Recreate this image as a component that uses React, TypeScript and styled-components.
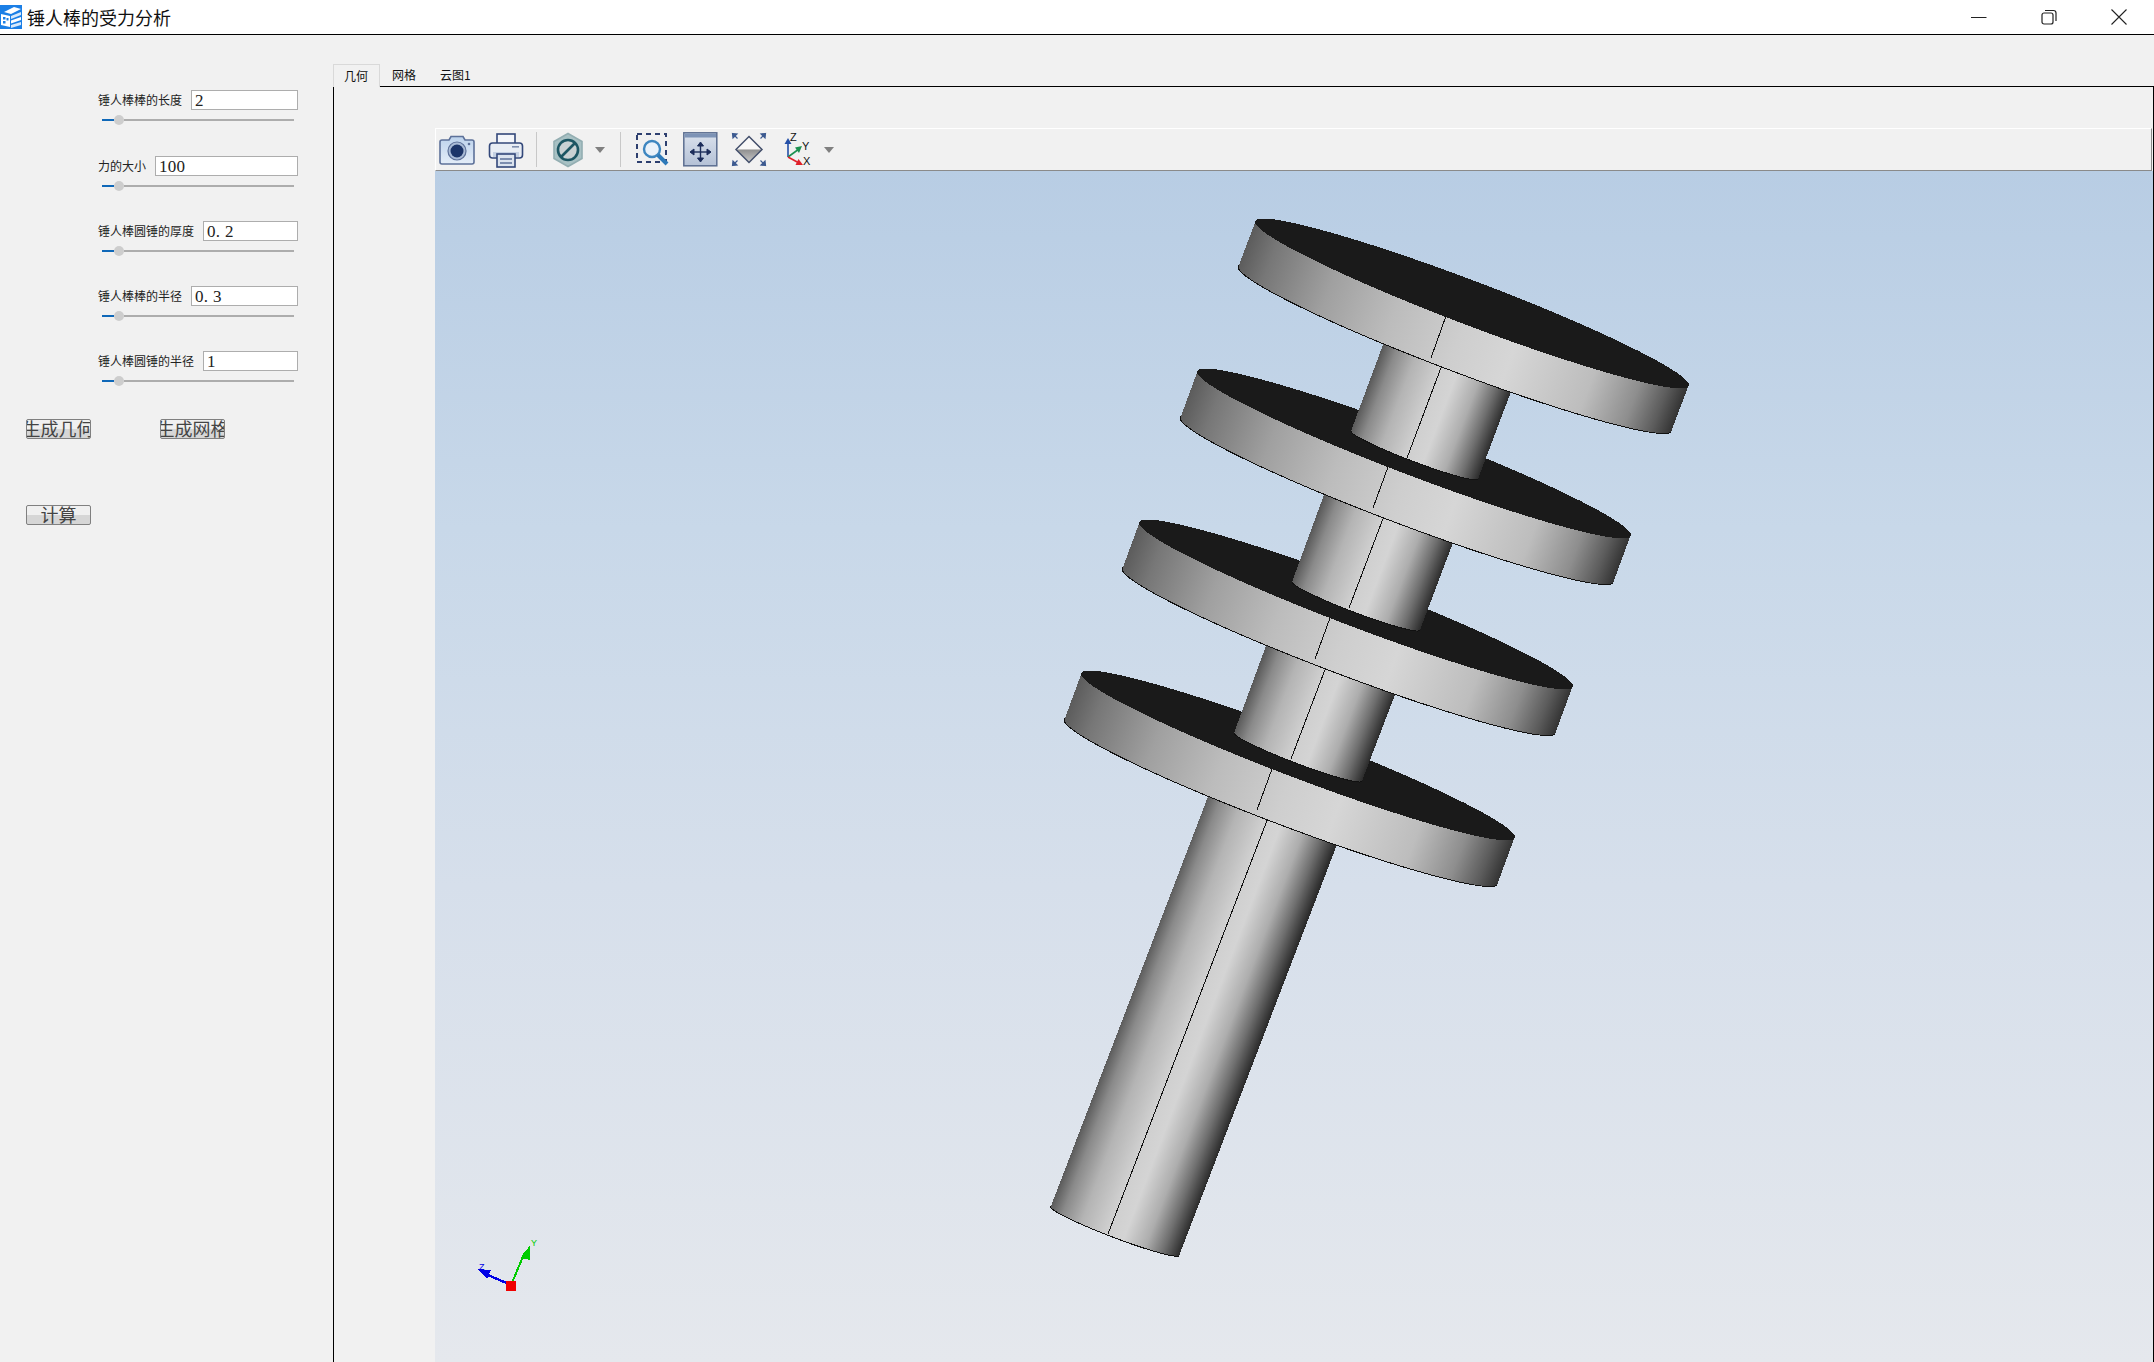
import React from 'react';
import styled, { createGlobalStyle } from 'styled-components';

const Global = createGlobalStyle`
  html, body, #root { margin: 0; height: 100%; }
  body { background: #f1f1f1; font-family: "Noto Sans CJK SC", "Liberation Sans", sans-serif; overflow: hidden; }
`;

const Window = styled.div`
  height: 100vh;
  display: flex;
  flex-direction: column;
  overflow: hidden;
`;

const TitleBar = styled.header`
  height: 34px;
  flex: none;
  background: #fff;
  border-bottom: 1px solid #000;
  display: flex;
  align-items: center;
`;

const TitleText = styled.span`
  margin-left: 5px;
  font-size: 18px;
  color: #111;
  flex: 1;
`;

const WinButton = styled.div`
  width: 70px;
  height: 34px;
  display: flex;
  align-items: center;
  justify-content: center;
`;

const Content = styled.div`
  flex: 1;
  min-height: 0;
  display: flex;
`;

const Sidebar = styled.aside`
  width: 333px;
  flex: none;
  padding-top: 55px;
  display: flex;
  flex-direction: column;
`;

const Field = styled.div`
  width: 200px;
  margin-left: 98px;
  margin-bottom: 30px;
  &:nth-child(1) { margin-bottom: 31px; }
`;

const FieldRow = styled.div`
  display: flex;
  align-items: center;
  gap: 9px;
  height: 20px;
`;

const FieldLabel = styled.label`
  font-size: 12px;
  color: #222;
  white-space: nowrap;
  position: relative;
  top: -0.5px;
`;

const NumberInput = styled.input`
  flex: 1;
  min-width: 0;
  height: 20px;
  box-sizing: border-box;
  border: 1px solid #adadad;
  background: #fff;
  padding: 2px 0 0 3px;
  font-family: "Liberation Serif", serif;
  font-size: 17px;
  letter-spacing: 0.3px;
  color: #222;
  outline: none;
`;

const Slider = styled.div`
  width: 192px;
  height: 10px;
  margin: 5px 0 0 4px;
  display: flex;
  align-items: center;
`;

const SliderFill = styled.div`
  width: 12px;
  height: 2px;
  background: #0f68b8;
`;

const SliderThumb = styled.div`
  width: 10px;
  height: 10px;
  border-radius: 50%;
  background: #cdcdcd;
`;

const SliderRail = styled.div`
  flex: 1;
  height: 2px;
  background: #adadad;
`;

const ButtonRow = styled.div<{ $top: number }>`
  display: flex;
  gap: 69px;
  padding-left: 26px;
  margin-top: ${p => p.$top}px;
`;

const ActionButton = styled.button`
  width: 65px;
  height: 20px;
  box-sizing: border-box;
  padding: 0 0 2px;
  border: 1px solid #808080;
  border-radius: 2px;
  background: linear-gradient(#f0f0f0 0, #f0f0f0 50%, #d6d6d6 50%, #d6d6d6 100%);
  display: flex;
  align-items: center;
  justify-content: center;
  overflow: hidden;
  font-family: "Noto Sans CJK SC", sans-serif;
  font-size: 18px;
  line-height: 18px;
  color: #444;
  white-space: nowrap;
  span { flex: none; }
`;

const Main = styled.main`
  flex: 1;
  min-width: 0;
  padding-top: 29px;
  display: flex;
  flex-direction: column;
`;

const TabBar = styled.div`
  height: 22px;
  flex: none;
  display: flex;
  position: relative;
  z-index: 1;
`;

const Tab = styled.div<{ $active?: boolean }>`
  box-sizing: border-box;
  height: ${p => (p.$active ? 23 : 22)}px;
  padding: ${p => (p.$active ? '0 11px 0 10px' : '0 12px')};
  font-size: 12px;
  line-height: 22px;
  color: #111;
  background: ${p => (p.$active ? '#f1f1f1' : 'transparent')};
  border: ${p => (p.$active ? '1px solid #d9d9d9' : 'none')};
  border-bottom: none;
`;

const Pane = styled.section`
  flex: 1;
  min-height: 0;
  border: 1px solid #000;
  border-bottom: none;
  padding: 41px 0 0 101px;
  display: flex;
  flex-direction: column;
`;

const Toolbar = styled.div`
  height: 43px;
  flex: none;
  box-sizing: border-box;
  margin-right: 1px;
  border-top: 1px solid #fff;
  border-left: 1px solid #fff;
  border-right: 1px solid #8a8a8a;
  border-bottom: 1px solid #8a8a8a;
  background: #f1f1f1;
  display: flex;
  align-items: center;
  padding-left: 3px;
`;

const ToolIcon = styled.div<{ $ml?: number }>`
  width: 36px;
  height: 36px;
  flex: none;
  margin-left: ${p => p.$ml ?? 0}px;
  svg { display: block; }
`;

const Separator = styled.div<{ $ml: number }>`
  width: 1px;
  height: 35px;
  background: #c8c8c8;
  margin-left: ${p => p.$ml}px;
  flex: none;
`;

const Caret = styled.div<{ $ml: number }>`
  width: 0;
  height: 0;
  flex: none;
  margin-left: ${p => p.$ml}px;
  border-left: 5px solid transparent;
  border-right: 5px solid transparent;
  border-top: 6px solid #808080;
`;

const Canvas = styled.div`
  flex: 1;
  min-height: 0;
  background: linear-gradient(#b8cde4 0%, #c8d8e9 30%, #d6dfeb 60%, #e5e8ed 100%);
  svg { display: block; width: 100%; height: 100%; }
`;

type Pt = [number, number];
interface Cyl { id: string; lt: Pt; rt: Pt; lb: Pt; rb: Pt; b: number; seam: [Pt, Pt]; disk: boolean }

// major axis of every circle on screen, square to the part's axis
const ROT = 20.8;

const half = (l: Pt, r: Pt) => Math.hypot(r[0] - l[0], r[1] - l[1]) / 2;

const bodyPath = (c: Cyl) => {
  const a = half(c.lb, c.rb);
  const top = c.disk
    ? `M${c.lt} A${a} ${c.b} ${ROT} 0 0 ${c.rt}`
    : `M${c.lt} L${c.rt}`;
  return `${top} L${c.rb} A${a} ${c.b} ${ROT} 0 1 ${c.lb} Z`;
};

const edgePath = (c: Cyl) => {
  const a = half(c.lb, c.rb);
  return `M${c.lb} A${a} ${c.b} ${ROT} 0 0 ${c.rb}`;
};

const facePath = (c: Cyl) => {
  const a = half(c.lt, c.rt);
  return `M${c.lt} A${a} ${c.b} ${ROT} 0 1 ${c.rt} A${a} ${c.b} ${ROT} 0 1 ${c.lt} Z`;
};

const gradientEnds = (c: Cyl) => {
  const a = half(c.lb, c.rb);
  const cx = (c.lb[0] + c.rb[0]) / 2;
  const cy = (c.lb[1] + c.rb[1]) / 2;
  const dx = a * Math.cos((ROT * Math.PI) / 180);
  const dy = a * Math.sin((ROT * Math.PI) / 180);
  return { x1: cx - dx, y1: cy - dy, x2: cx + dx, y2: cy + dy };
};

// painted from the bottom of the part upwards, each disk hides the top of the shaft under it
const parts: Cyl[] = [
  { id: 'shaft4', disk: false, b: 6.5, lt: [1209, 794], rt: [1338, 842], lb: [1051, 1206], rb: [1179, 1256], seam: [[1268, 818], [1108, 1234]] },
  { id: 'disk4', disk: true, b: 22, lt: [1082, 672], rt: [1514, 839], lb: [1065, 718], rb: [1497, 885], seam: [[1272, 769], [1257, 810]] },
  { id: 'shaft3', disk: false, b: 6.5, lt: [1267, 643], rt: [1396, 692], lb: [1234, 733], rb: [1362, 781], seam: [[1326, 667], [1291, 759]] },
  { id: 'disk3', disk: true, b: 22, lt: [1140, 521], rt: [1572, 688], lb: [1123, 567], rb: [1555, 734], seam: [[1330, 618], [1315, 659]] },
  { id: 'shaft2', disk: false, b: 6.5, lt: [1325, 492], rt: [1454, 540], lb: [1292, 582], rb: [1420, 630], seam: [[1384, 516], [1349, 608]] },
  { id: 'disk2', disk: true, b: 22, lt: [1198, 370], rt: [1630, 537], lb: [1181, 416], rb: [1613, 583], seam: [[1388, 467], [1373, 508]] },
  { id: 'shaft1', disk: false, b: 6.5, lt: [1384, 342], rt: [1512, 389], lb: [1351, 431], rb: [1478, 479], seam: [[1442, 365], [1407, 458]] },
  { id: 'disk1', disk: true, b: 22, lt: [1256, 220], rt: [1688, 387], lb: [1239, 265], rb: [1671, 432], seam: [[1446, 316], [1431, 358]] },
];

const diskShade: [number, string][] = [
  [0, '#5c5c5c'], [0.06, '#777777'], [0.2, '#a0a0a0'], [0.35, '#bcbcbc'], [0.5, '#cecece'],
  [0.62, '#d6d6d6'], [0.8, '#bdbdbd'], [0.9, '#8e8e8e'], [0.96, '#5c5c5c'], [1, '#333333'],
];

const shaftShade: [number, string][] = [
  [0, '#5a5a5a'], [0.1, '#8a8a8a'], [0.25, '#b4b4b4'], [0.45, '#cfcfcf'], [0.58, '#d4d4d4'],
  [0.75, '#adadad'], [0.88, '#6f6f6f'], [1, '#2c2c2c'],
];

const Part: React.FC<{ c: Cyl }> = ({ c }) => (
  <g>
    <linearGradient id={c.id} gradientUnits="userSpaceOnUse" {...gradientEnds(c)}>
      {(c.disk ? diskShade : shaftShade).map(([o, col]) => <stop key={o} offset={o} stopColor={col} />)}
    </linearGradient>
    <path d={bodyPath(c)} fill={`url(#${c.id})`} />
    <path d={edgePath(c)} fill="none" stroke="#111" strokeWidth="1" />
    {c.disk && <path d={facePath(c)} fill="#1a1a1a" />}
    <line x1={c.seam[0][0]} y1={c.seam[0][1]} x2={c.seam[1][0]} y2={c.seam[1][1]} stroke="#111" strokeWidth="1" />
  </g>
);

const Model = () => (
  <svg viewBox="435 171 1718 1191" shapeRendering="crispEdges">
    {parts.map(p => <Part key={p.id} c={p} />)}
    <g>
      <line x1="511" y1="1285" x2="525" y2="1252" stroke="#00cc00" strokeWidth="2" />
      <polygon points="530,1245 521,1258 530,1260" fill="#00cc00" />
      <line x1="511" y1="1285" x2="488" y2="1275" stroke="#0000e6" strokeWidth="2.4" />
      <polygon points="477,1269 491,1270 487,1279" fill="#0000e6" />
      <rect x="506" y="1281" width="10" height="10" fill="#f00000" />
      <text x="531" y="1246" fontFamily="Liberation Sans" fontSize="9" fill="#00cc00">Y</text>
      <text x="479" y="1270" fontFamily="Liberation Sans" fontSize="9" fill="#0000e6">Z</text>
    </g>
  </svg>
);

const AppLogo = () => (
  <svg width="22" height="24" viewBox="0 0 22 24">
    <rect width="22" height="24" fill="#1b7fe6" />
    <polygon points="4,7 14,2 21,4 11,9" fill="#fff" />
    <polygon points="1,9 10,11 10,22 1,20" fill="#fff" />
    <rect x="3" y="12" width="2.500" height="2.500" fill="#1b7fe6" />
    <rect x="3" y="16" width="2.500" height="2.500" fill="#1b7fe6" />
    <rect x="6.500" y="13" width="2" height="2.500" fill="#1b7fe6" />
    <polygon points="11,11 21,7 21,10 11,14" fill="#d8e9fb" />
    <polygon points="11,15.500 21,12 21,15 11,18.500" fill="#fff" />
    <polygon points="11,20 21,17 21,20 11,23" fill="#d8e9fb" />
  </svg>
);

const CameraIcon = () => (
  <svg width="36" height="36" viewBox="0 0 36 36">
    <defs>
      <linearGradient id="camBody" x1="0" y1="0" x2="0" y2="1">
        <stop offset="0" stopColor="#bcd2ec" /><stop offset="1" stopColor="#e4edf8" />
      </linearGradient>
    </defs>
    <path d="M3 8h7l2-3.500h12l2 3.500h7a2 2 0 0 1 2 2v20a2 2 0 0 1-2 2H3a2 2 0 0 1-2-2V10a2 2 0 0 1 2-2z" fill="url(#camBody)" stroke="#5d7199" strokeWidth="1.600" />
    <circle cx="18" cy="19" r="9" fill="#a9bbd6" stroke="#5d7199" strokeWidth="1.200" />
    <circle cx="18" cy="19" r="6.500" fill="#1b3468" />
    <circle cx="30" cy="12" r="1.300" fill="#5d7199" />
  </svg>
);

const PrinterIcon = () => (
  <svg width="36" height="36" viewBox="0 0 36 36">
    <rect x="9" y="2" width="18" height="11" fill="#f4f6fa" stroke="#33487a" strokeWidth="1.600" />
    <rect x="1.500" y="11" width="33" height="15" rx="3" fill="#e8edf4" stroke="#33487a" strokeWidth="1.600" />
    <rect x="5" y="20" width="26" height="5" fill="#c4d0e2" />
    <rect x="24" y="14" width="7" height="1.600" fill="#7f8fae" />
    <rect x="9" y="22" width="18" height="13" fill="#dbe3ee" stroke="#33487a" strokeWidth="1.600" />
    <path d="M12 27h12M12 31h12" stroke="#5d7199" strokeWidth="1.400" />
  </svg>
);

const ShadeIcon = () => (
  <svg width="36" height="36" viewBox="0 0 36 36">
    <polygon points="18,1.500 32,9.500 32,26.500 18,34.500 4,26.500 4,9.500" fill="#a8c1c4" stroke="#93aeb2" strokeWidth="1.600" />
    <circle cx="18" cy="18" r="10" fill="#c9d1d3" stroke="#1d5663" strokeWidth="2.600" />
    <line x1="11" y1="25" x2="25" y2="11" stroke="#1d5663" strokeWidth="2.600" />
  </svg>
);

const ZoomBoxIcon = () => (
  <svg width="36" height="36" viewBox="0 0 36 36">
    <rect x="3" y="2" width="29" height="28" fill="none" stroke="#2d3f6f" strokeWidth="2" strokeDasharray="5 4" />
    <circle cx="18" cy="17" r="8" fill="#eaf2fa" stroke="#3d86c0" strokeWidth="2.400" />
    <line x1="24" y1="23" x2="33" y2="32" stroke="#2e7ab9" strokeWidth="4" />
  </svg>
);

const FitIcon = () => (
  <svg width="36" height="36" viewBox="0 0 36 36">
    <defs>
      <linearGradient id="fitBody" x1="0" y1="0" x2="0" y2="1">
        <stop offset="0" stopColor="#dbe2ed" /><stop offset="1" stopColor="#b4c1d6" />
      </linearGradient>
    </defs>
    <rect x="0.800" y="0.800" width="33" height="33" fill="url(#fitBody)" stroke="#5c6e90" strokeWidth="1.500" />
    <rect x="1.500" y="1.500" width="31.500" height="4" fill="#7d93b6" />
    <g fill="#1c2d5a" stroke="#1c2d5a">
      <line x1="17.500" y1="11" x2="17.500" y2="29" strokeWidth="1.400" />
      <line x1="8" y1="20" x2="27" y2="20" strokeWidth="1.400" />
      <polygon points="17.500,10 14.500,14 20.500,14" />
      <polygon points="17.500,30 14.500,26 20.500,26" />
      <polygon points="7,20 11,17 11,23" />
      <polygon points="28,20 24,17 24,23" />
    </g>
  </svg>
);

const FrontIcon = () => (
  <svg width="36" height="36" viewBox="0 0 36 36">
    <defs>
      <linearGradient id="diaLow" x1="0" y1="0" x2="0" y2="1">
        <stop offset="0" stopColor="#8f8f8f" /><stop offset="1" stopColor="#c9c9c9" />
      </linearGradient>
    </defs>
    <polygon points="18,4.500 31,17.500 5,17.500" fill="#f8f8f8" />
    <polygon points="5,17.500 31,17.500 18,30.500" fill="url(#diaLow)" />
    <polygon points="18,4.500 31,17.500 18,30.500 5,17.500" fill="none" stroke="#44506c" strokeWidth="1.500" />
    <g fill="#3c5a90" stroke="#3c5a90" strokeWidth="1.200">
      <path d="M3 3l3.500 3.500M33 3l-3.500 3.500M3 32l3.500-3.500M33 32l-3.500-3.500" fill="none" />
      <polygon points="1.500,1.500 6,2 2,6" />
      <polygon points="34.500,1.500 30,2 34,6" />
      <polygon points="1.500,33.500 6,33 2,29" />
      <polygon points="34.500,33.500 30,33 34,29" />
    </g>
  </svg>
);

const AxesIcon = () => (
  <svg width="36" height="36" viewBox="0 0 36 36" fontFamily="Liberation Sans" fontSize="11" fill="#111">
    <path d="M6 25V9" stroke="#2450a8" strokeWidth="1.600" />
    <polygon points="6,6 2.500,12 9.500,12" fill="#2450a8" />
    <path d="M6 25l11-8" stroke="#1c9150" strokeWidth="1.600" />
    <polygon points="20,14 13,15.500 17,21" fill="#1c9150" />
    <path d="M6 25l11 6" stroke="#e0202a" strokeWidth="1.600" />
    <polygon points="21,33 13.500,33 16.500,27" fill="#e0202a" />
    <text x="8" y="9">Z</text>
    <text x="20" y="18">Y</text>
    <text x="21" y="33">X</text>
  </svg>
);

const fields = [
  { label: '锤人棒棒的长度', value: '2' },
  { label: '力的大小', value: '100' },
  { label: '锤人棒圆锤的厚度', value: '0. 2' },
  { label: '锤人棒棒的半径', value: '0. 3' },
  { label: '锤人棒圆锤的半径', value: '1' },
];

export default function App() {
  return (
    <Window>
      <Global />
      <TitleBar>
        <AppLogo />
        <TitleText>锤人棒的受力分析</TitleText>
        <WinButton>
          <svg width="16" height="16" viewBox="0 0 16 16"><path d="M0 8.500h15.500" stroke="#222" /></svg>
        </WinButton>
        <WinButton>
          <svg width="16" height="16" viewBox="0 0 16 16" fill="none" stroke="#222" strokeWidth="1.200">
            <rect x="1" y="4" width="11" height="11" rx="2" />
            <path d="M4 1.500h8.500a2.500 2.500 0 0 1 2.500 2.500v8" />
          </svg>
        </WinButton>
        <WinButton>
          <svg width="16" height="16" viewBox="0 0 16 16"><path d="M.5 .5l15 15M15.500 .5l-15 15" stroke="#222" strokeWidth="1.100" /></svg>
        </WinButton>
      </TitleBar>
      <Content>
        <Sidebar>
          {fields.map(f => (
            <Field key={f.label}>
              <FieldRow>
                <FieldLabel>{f.label}</FieldLabel>
                <NumberInput readOnly value={f.value} />
              </FieldRow>
              <Slider>
                <SliderFill />
                <SliderThumb />
                <SliderRail />
              </Slider>
            </Field>
          ))}
          <ButtonRow $top={3}>
            <ActionButton><span>生成几何</span></ActionButton>
            <ActionButton><span>生成网格</span></ActionButton>
          </ButtonRow>
          <ButtonRow $top={66}>
            <ActionButton><span>计算</span></ActionButton>
          </ButtonRow>
        </Sidebar>
        <Main>
          <TabBar>
            <Tab $active>几何</Tab>
            <Tab>网格</Tab>
            <Tab>云图1</Tab>
          </TabBar>
          <Pane>
            <Toolbar>
              <ToolIcon><CameraIcon /></ToolIcon>
              <ToolIcon $ml={13}><PrinterIcon /></ToolIcon>
              <Separator $ml={12} />
              <ToolIcon $ml={13}><ShadeIcon /></ToolIcon>
              <Caret $ml={9} />
              <Separator $ml={15} />
              <ToolIcon $ml={13}><ZoomBoxIcon /></ToolIcon>
              <ToolIcon $ml={13}><FitIcon /></ToolIcon>
              <ToolIcon $ml={12}><FrontIcon /></ToolIcon>
              <ToolIcon $ml={15}><AxesIcon /></ToolIcon>
              <Caret $ml={6} />
            </Toolbar>
            <Canvas><Model /></Canvas>
          </Pane>
        </Main>
      </Content>
    </Window>
  );
}
